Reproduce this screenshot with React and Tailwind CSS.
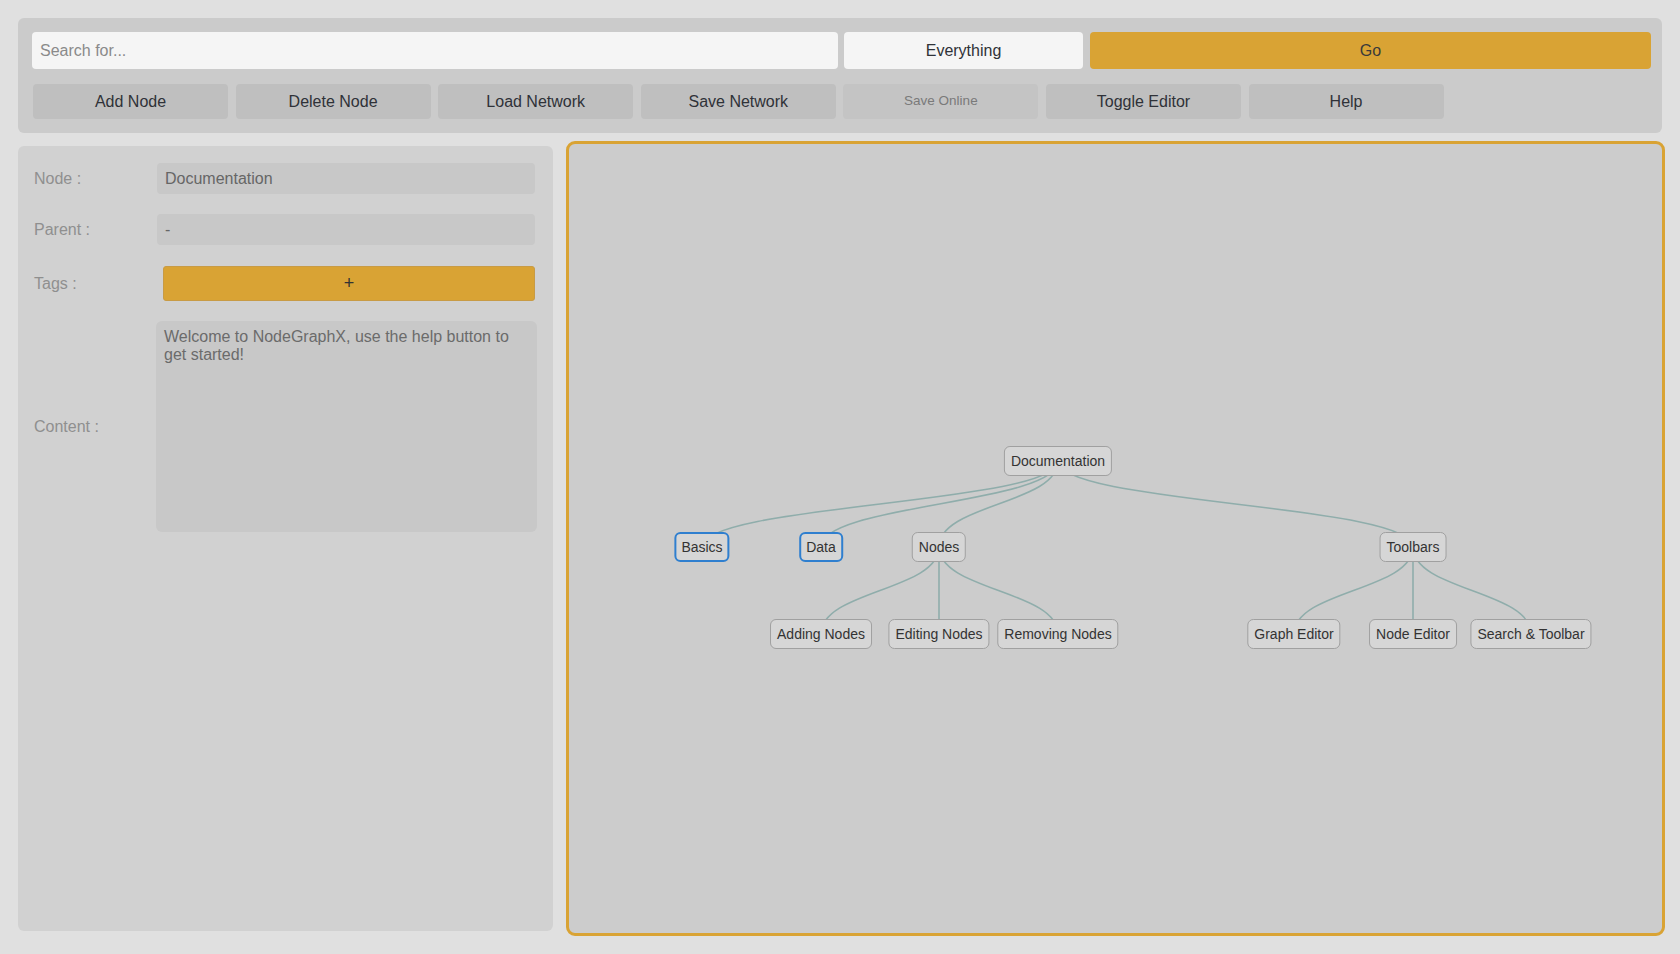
import React from "react";

const toolButtons = [
  { label: "Add Node" },
  { label: "Delete Node" },
  { label: "Load Network" },
  { label: "Save Network" },
  { label: "Save Online", muted: true },
  { label: "Toggle Editor" },
  { label: "Help" },
];

// graph nodes, centers relative to the graph panel's padding box
const nodes = [
  { id: "doc", label: "Documentation", x: 489, y: 317 },
  { id: "basics", label: "Basics", x: 133, y: 403, active: true },
  { id: "data", label: "Data", x: 252, y: 403, active: true },
  { id: "nodes", label: "Nodes", x: 370, y: 403 },
  { id: "toolbars", label: "Toolbars", x: 844, y: 403 },
  { id: "adding", label: "Adding Nodes", x: 252, y: 490 },
  { id: "editing", label: "Editing Nodes", x: 370, y: 490 },
  { id: "removing", label: "Removing Nodes", x: 489, y: 490 },
  { id: "graphEditor", label: "Graph Editor", x: 725, y: 490 },
  { id: "nodeEditor", label: "Node Editor", x: 844, y: 490 },
  { id: "searchToolbar", label: "Search & Toolbar", x: 962, y: 490 },
];

const edges = [
  ["doc", "basics"],
  ["doc", "data"],
  ["doc", "nodes"],
  ["doc", "toolbars"],
  ["nodes", "adding"],
  ["nodes", "editing"],
  ["nodes", "removing"],
  ["toolbars", "graphEditor"],
  ["toolbars", "nodeEditor"],
  ["toolbars", "searchToolbar"],
];

const byId = Object.fromEntries(nodes.map((n) => [n.id, n]));

const edgePath = (a, b) => {
  const my = (a.y + b.y) / 2;
  return `M ${a.x} ${a.y} C ${a.x} ${my}, ${b.x} ${my}, ${b.x} ${b.y}`;
};

const Toolbar = () => (
  <div className="mr-[3px] h-[115px] shrink-0 rounded-[6px] bg-[#cbcbcb] pl-[14px] pr-[11px] pt-[14px]">
    {/* Search row */}
    <div className="flex h-[37px]">
      <input
        placeholder="Search for..."
        className="w-[806px] h-full rounded-[4px] bg-[#f5f5f5] px-[8px] text-[16px] text-[#333] outline-none placeholder:text-[#8a8a8a]"
      />
      <div className="ml-[6px] w-[239px] h-full rounded-[4px] bg-[#f5f5f5] flex items-center justify-center text-[16px] text-[#2f3238]">
        Everything
      </div>
      <button className="ml-[7px] flex-1 h-full rounded-[4px] bg-[#d9a334] text-[16px] text-[#3a3a3a]">
        Go
      </button>
    </div>

    {/* Action buttons */}
    <div className="mt-[15px] flex gap-[7.6px] pl-[1px]">
      {toolButtons.map((b) => (
        <button
          key={b.label}
          className={
            b.muted
              ? "w-[195px] h-[35px] rounded-[4px] bg-[#c4c4c4] text-[13.5px] text-[#7a7a7a]"
              : "w-[195px] h-[35px] rounded-[4px] bg-[#bfbfbf] text-[16px] text-[#2f3238]"
          }
        >
          {b.label}
        </button>
      ))}
    </div>
  </div>
);

const NodeEditor = () => (
  <div className="w-[535px] shrink-0 my-[5px] rounded-[6px] bg-[#d1d1d1] pt-[17px] pl-[16px] pr-[18px] font-['Liberation_Sans',Arial,sans-serif]">
    <div className="flex items-center h-[31px]">
      <span className="w-[123px] text-[16px] text-[#8f8f8f]">Node :</span>
      <input
        readOnly
        value="Documentation"
        className="flex-1 h-full rounded-[4px] bg-[#c8c8c8] px-[8px] text-[16px] text-[#666] outline-none"
      />
    </div>

    <div className="mt-[20px] flex items-center h-[31px]">
      <span className="w-[123px] text-[16px] text-[#8f8f8f]">Parent :</span>
      <input
        readOnly
        value="-"
        className="flex-1 h-full rounded-[4px] bg-[#c8c8c8] px-[8px] text-[16px] text-[#666] outline-none"
      />
    </div>

    <div className="mt-[21px] flex items-center h-[35px]">
      <span className="w-[123px] text-[16px] text-[#8f8f8f]">Tags :</span>
      <button className="ml-[6px] flex-1 h-full rounded-[3px] border border-[#c89b45] bg-[#d9a334] text-[18px] text-[#333]">
        +
      </button>
    </div>

    <div className="mt-[20px] flex items-center h-[211px]">
      <span className="w-[123px] text-[16px] text-[#8f8f8f]">Content :</span>
      <textarea
        readOnly
        value="Welcome to NodeGraphX, use the help button to get started!"
        className="-ml-[1px] -mr-[2px] flex-1 h-full resize-none rounded-[6px] bg-[#c8c8c8] px-[8px] pt-[7px] text-[16px] leading-[18px] text-[#6b6b6b] outline-none"
      />
    </div>
  </div>
);

const GraphView = () => (
  <div className="relative flex-1 overflow-hidden rounded-[9px] border-[3px] border-[#d9a334] bg-[#cccccc] font-['Liberation_Sans',Arial,sans-serif]">
    <svg className="absolute inset-0 w-full h-full">
      {edges.map(([a, b]) => (
        <path
          key={a + b}
          d={edgePath(byId[a], byId[b])}
          fill="none"
          stroke="#8fadab"
          strokeWidth="1.6"
        />
      ))}
    </svg>
    {nodes.map((n) => (
      <div
        key={n.id}
        className={
          n.active
            ? "absolute h-[30px] -translate-x-1/2 -translate-y-1/2 flex items-center rounded-[6px] border-2 border-[#2f7fcf] bg-[#d6d6d6] px-[5px] text-[14px] text-[#333] whitespace-nowrap"
            : "absolute h-[30px] -translate-x-1/2 -translate-y-1/2 flex items-center rounded-[6px] border border-[#a0a0a0] bg-[#d6d6d6] px-[6px] text-[14px] text-[#333] whitespace-nowrap"
        }
        style={{ left: n.x, top: n.y }}
      >
        {n.label}
      </div>
    ))}
  </div>
);

export default function App() {
  return (
    <div className="h-screen w-full overflow-hidden bg-[#e0e0e0] pt-[18px] pb-[18px] pl-[18px] pr-[15px] flex flex-col gap-[8px] font-['Liberation_Sans',Arial,sans-serif]">
      <Toolbar />
      <div className="flex-1 flex gap-[13px] min-h-0">
        <NodeEditor />
        <GraphView />
      </div>
    </div>
  );
}
